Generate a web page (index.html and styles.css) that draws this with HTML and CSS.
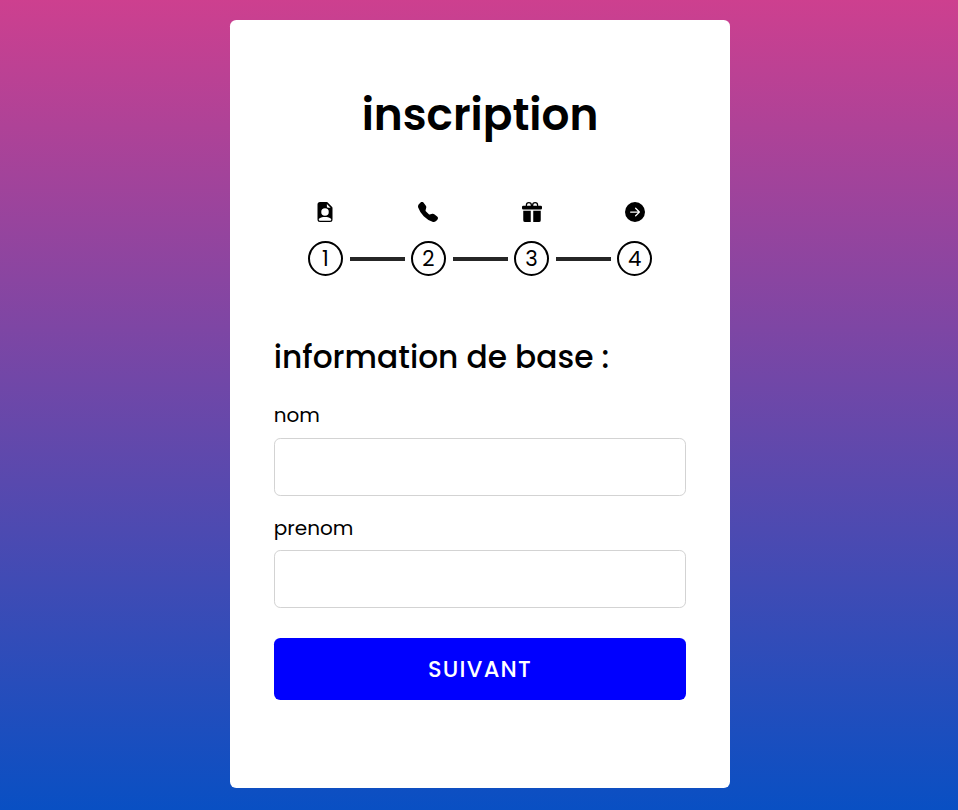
FILE: index.html
```html
<!DOCTYPE html>
<html lang="fr">
<head>
<meta charset="utf-8">
<title>inscription</title>
<link rel="stylesheet" href="styles.css">
</head>
<body>
<main class="card">
  <h1 class="title">inscription</h1>
  <div class="steps">
    <div class="step">
      <svg class="icon" viewBox="0 0 16 16"><path d="M9.293 0H4a2 2 0 0 0-2 2v12a2 2 0 0 0 2 2h8a2 2 0 0 0 2-2V4.707A1 1 0 0 0 13.707 4L10 .293A1 1 0 0 0 9.293 0zM9.500 3.500v-2l3 3h-2a1 1 0 0 1-1-1zM11 8a3 3 0 1 1-6 0 3 3 0 0 1 6 0zm2 5.755V14a1 1 0 0 1-1 1H4a1 1 0 0 1-1-1v-.245S4 12 8 12s5 1.755 5 1.755z"/></svg>
      <span class="bullet">1</span>
    </div>
    <div class="step">
      <svg class="icon" viewBox="0 0 16 16"><path fill-rule="evenodd" d="M1.885.511a1.745 1.745 0 0 1 2.610.163L6.290 2.980c.329.423.445.974.315 1.494l-.547 2.190a.678.678 0 0 0 .178.643l2.457 2.457a.678.678 0 0 0 .644.178l2.189-.547a1.745 1.745 0 0 1 1.494.315l2.306 1.794c.829.645.905 1.870.163 2.611l-1.034 1.034c-.740.740-1.846 1.065-2.877.702a18.634 18.634 0 0 1-7.010-4.420 18.634 18.634 0 0 1-4.420-7.009c-.362-1.030-.037-2.137.703-2.877z"/></svg>
      <span class="bullet">2</span>
    </div>
    <div class="step">
      <svg class="icon" viewBox="0 0 16 16"><path d="M3 2.500a2.500 2.500 0 0 1 5 0 2.500 2.500 0 0 1 5 0v.006c0 .070 0 .270-.038.494H15a1 1 0 0 1 1 1v1a1 1 0 0 1-1 1H1a1 1 0 0 1-1-1V4a1 1 0 0 1 1-1h2.038A2.968 2.968 0 0 1 3 2.506zm1.068.500H7v-.500a1.500 1.500 0 1 0-3 0c0 .085.002.274.045.430zM9 3h2.932l.023-.070c.043-.156.045-.345.045-.430a1.500 1.500 0 0 0-3 0zm6 4v7.500a1.500 1.500 0 0 1-1.500 1.500H9V7zM2.500 16A1.500 1.500 0 0 1 1 14.500V7h6v9z"/></svg>
      <span class="bullet">3</span>
    </div>
    <div class="step">
      <svg class="icon" viewBox="0 0 16 16"><path d="M8 0a8 8 0 1 1 0 16A8 8 0 0 1 8 0M4.500 7.500a.500.500 0 0 0 0 1h5.793l-2.147 2.146a.500.500 0 0 0 .708.708l3-3a.500.500 0 0 0 0-.708l-3-3a.500.500 0 1 0-.708.708L10.293 7.500z"/></svg>
      <span class="bullet">4</span>
    </div>
  </div>
  <form class="form">
    <h2 class="subtitle">information de base :</h2>
    <div class="field">
      <label class="label" for="nom">nom</label>
      <input class="input" id="nom" type="text">
    </div>
    <div class="field">
      <label class="label" for="prenom">prenom</label>
      <input class="input" id="prenom" type="text">
    </div>
    <button class="button" type="button">SUIVANT</button>
  </form>
</main>
</body>
</html>
```
FILE: styles.css
```css
* { box-sizing: border-box; margin: 0; padding: 0; }
body {
  min-height: 810px;
  padding: 20px 0 0 2px;
  overflow: hidden;
  color: #000;
  font-family: Poppins, "Noto Sans", sans-serif;
  background: linear-gradient(to top, #0250c5 -3.5%, #d43f8d 103.5%);
}
.card {
  width: 500px;
  height: 768px;
  margin: 0 auto;
  padding: 62px 43.75px 0;
  background: #fff;
  border-radius: 6.25px;
}
.title {
  font-size: 43.75px;
  font-weight: 600;
  line-height: 66px;
  text-align: center;
}
.steps { display: flex; margin-top: 54px; }
.step {
  flex: 1;
  display: flex;
  flex-direction: column;
  align-items: center;
}
.icon { display: block; width: 20px; height: 20px; }
.bullet {
  position: relative;
  width: 35.25px;
  height: 35.25px;
  margin-top: 19px;
  border: 2px solid #000;
  border-radius: 50%;
  font-size: 21.25px;
  font-weight: 400;
  line-height: 31.25px;
  text-align: center;
}
.bullet::after {
  content: "";
  position: absolute;
  left: 40px;
  top: 14px;
  width: 55px;
  height: 4px;
  background: #262626;
}
.step:last-child .bullet::after { display: none; }
.form { margin-top: 58px; }
.subtitle {
  font-size: 31.25px;
  font-weight: 500;
  line-height: 47px;
}
.field { height: 112.5px; }
.subtitle + .field { margin-top: 19px; }
.label {
  display: block;
  height: 37.5px;
  font-size: 20px;
  font-weight: 400;
  line-height: 30px;
}
.input {
  display: block;
  width: 100%;
  height: 58px;
  border: 1px solid lightgrey;
  border-radius: 6.25px;
}
.button {
  display: block;
  width: 100%;
  height: 62px;
  margin-top: 13px;
  border: none;
  border-radius: 6.25px;
  color: #fff;
  background: #00f;
  font: 500 22.5px/62px Poppins, "Noto Sans", sans-serif;
  letter-spacing: 1.25px;
}
```
